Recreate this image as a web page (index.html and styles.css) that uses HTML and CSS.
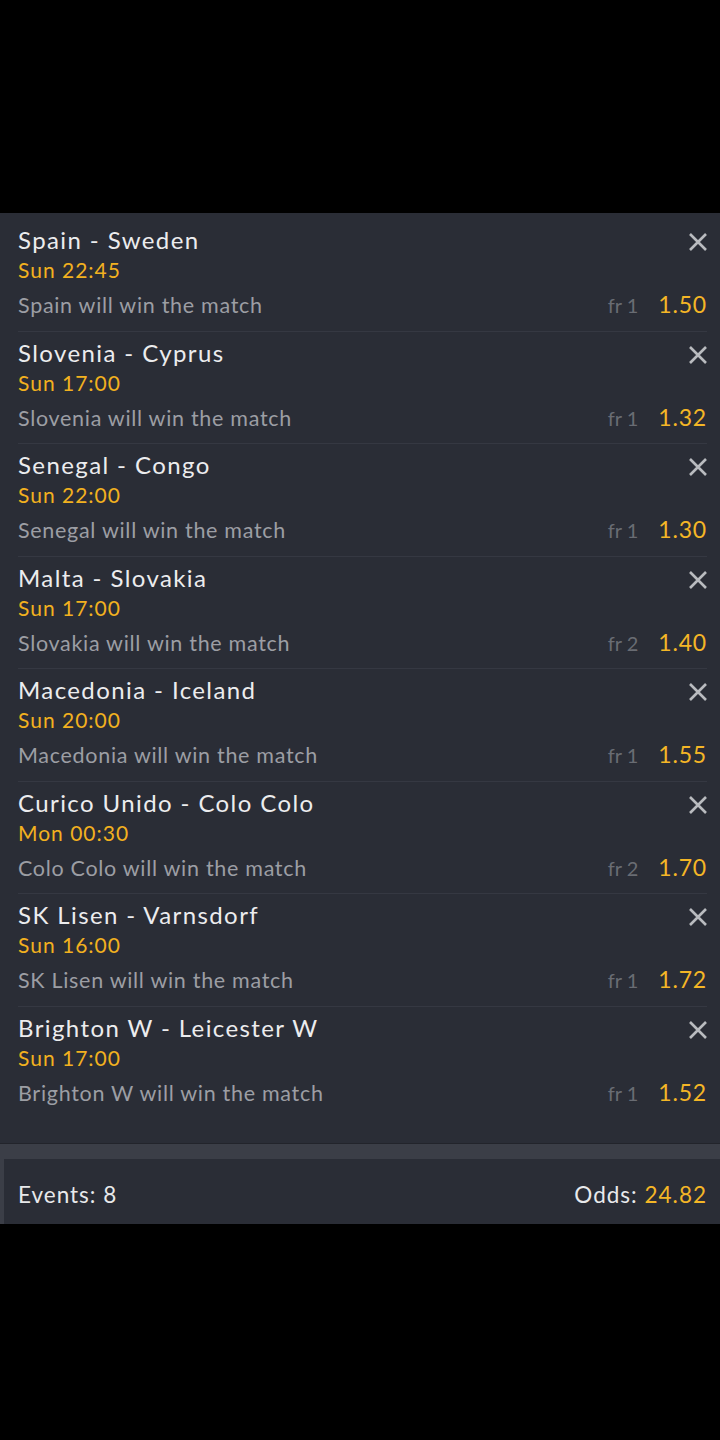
FILE: index.html
```html
<!DOCTYPE html>
<html lang="en">
<head>
  <meta charset="UTF-8">
  <title>Bet slip</title>
  <meta name="viewport" content="width=device-width,initial-scale=1">
  <link rel="stylesheet" href="styles.css">
</head>
<body>
  <div class="top-space"></div>
  <div class="slip">
    <div class="slip-list">
      <div class="bet">
        <div class="bet-head"><span class="bet-title">Spain - Sweden</span><span class="bet-close"><svg viewBox="0 0 20 20" width="20" height="20"><path d="M2 2L18 18M18 2L2 18"/></svg></span></div>
        <div class="bet-time">Sun 22:45</div>
        <div class="bet-foot"><span class="bet-pick">Spain will win the match</span><span class="bet-odds"><span class="bet-fr">fr 1</span><span class="bet-price">1.50</span></span></div>
      </div>
      <div class="bet">
        <div class="bet-head"><span class="bet-title">Slovenia - Cyprus</span><span class="bet-close"><svg viewBox="0 0 20 20" width="20" height="20"><path d="M2 2L18 18M18 2L2 18"/></svg></span></div>
        <div class="bet-time">Sun 17:00</div>
        <div class="bet-foot"><span class="bet-pick">Slovenia will win the match</span><span class="bet-odds"><span class="bet-fr">fr 1</span><span class="bet-price">1.32</span></span></div>
      </div>
      <div class="bet">
        <div class="bet-head"><span class="bet-title">Senegal - Congo</span><span class="bet-close"><svg viewBox="0 0 20 20" width="20" height="20"><path d="M2 2L18 18M18 2L2 18"/></svg></span></div>
        <div class="bet-time">Sun 22:00</div>
        <div class="bet-foot"><span class="bet-pick">Senegal will win the match</span><span class="bet-odds"><span class="bet-fr">fr 1</span><span class="bet-price">1.30</span></span></div>
      </div>
      <div class="bet">
        <div class="bet-head"><span class="bet-title">Malta - Slovakia</span><span class="bet-close"><svg viewBox="0 0 20 20" width="20" height="20"><path d="M2 2L18 18M18 2L2 18"/></svg></span></div>
        <div class="bet-time">Sun 17:00</div>
        <div class="bet-foot"><span class="bet-pick">Slovakia will win the match</span><span class="bet-odds"><span class="bet-fr">fr 2</span><span class="bet-price">1.40</span></span></div>
      </div>
      <div class="bet">
        <div class="bet-head"><span class="bet-title">Macedonia - Iceland</span><span class="bet-close"><svg viewBox="0 0 20 20" width="20" height="20"><path d="M2 2L18 18M18 2L2 18"/></svg></span></div>
        <div class="bet-time">Sun 20:00</div>
        <div class="bet-foot"><span class="bet-pick">Macedonia will win the match</span><span class="bet-odds"><span class="bet-fr">fr 1</span><span class="bet-price">1.55</span></span></div>
      </div>
      <div class="bet">
        <div class="bet-head"><span class="bet-title">Curico Unido - Colo Colo</span><span class="bet-close"><svg viewBox="0 0 20 20" width="20" height="20"><path d="M2 2L18 18M18 2L2 18"/></svg></span></div>
        <div class="bet-time">Mon 00:30</div>
        <div class="bet-foot"><span class="bet-pick">Colo Colo will win the match</span><span class="bet-odds"><span class="bet-fr">fr 2</span><span class="bet-price">1.70</span></span></div>
      </div>
      <div class="bet">
        <div class="bet-head"><span class="bet-title">SK Lisen - Varnsdorf</span><span class="bet-close"><svg viewBox="0 0 20 20" width="20" height="20"><path d="M2 2L18 18M18 2L2 18"/></svg></span></div>
        <div class="bet-time">Sun 16:00</div>
        <div class="bet-foot"><span class="bet-pick">SK Lisen will win the match</span><span class="bet-odds"><span class="bet-fr">fr 1</span><span class="bet-price">1.72</span></span></div>
      </div>
      <div class="bet">
        <div class="bet-head"><span class="bet-title">Brighton W - Leicester W</span><span class="bet-close"><svg viewBox="0 0 20 20" width="20" height="20"><path d="M2 2L18 18M18 2L2 18"/></svg></span></div>
        <div class="bet-time">Sun 17:00</div>
        <div class="bet-foot"><span class="bet-pick">Brighton W will win the match</span><span class="bet-odds"><span class="bet-fr">fr 1</span><span class="bet-price">1.52</span></span></div>
      </div>
    </div>
    <div class="slip-band"></div>
    <div class="slip-total">
      <span class="total-events">Events: 8</span>
      <span class="total-odds">Odds: <span class="total-value">24.82</span></span>
    </div>
  </div>
</body>
</html>
```

FILE: styles.css
```css
body {
  margin: 0;
  padding: 0;
  background: #000;
  font-family: 'Lato', 'Noto Sans', sans-serif;
  min-height: 1440px;
}
.top-space {
  height: 213px;
}
.slip {
  background: #2a2d36;
}
.slip-list {
  padding: 6px 0 25px 0;
  border-bottom: 1px solid #22242b;
}
.bet {
  margin: 0 13px 0 18px;
  padding: 5px 0 8.5px 0;
  border-bottom: 1px solid #353842;
}
.bet:last-child {
  border-bottom: none;
}
.bet-head, .bet-foot {
  display: flex;
  justify-content: space-between;
  white-space: nowrap;
}
.bet-head {
  height: 31px;
  line-height: 31px;
}
.bet-title {
  font-size: 24px;
  letter-spacing: 1.4px;
  color: #ececee;
}
.bet-close {
  display: flex;
  align-items: flex-start;
  flex-shrink: 0;
  padding-top: 8px;
  margin-right: -1px;
}
.bet-close svg {
  stroke: #b9bbbf;
  stroke-width: 2.6;
  fill: none;
}
.bet-time {
  height: 30px;
  font-size: 21px;
  line-height: 30px;
  letter-spacing: 1px;
  color: #f2b11f;
}
.bet-foot {
  height: 36px;
  margin-top: 1px;
  line-height: 36px;
  align-items: baseline;
}
.bet-pick {
  font-size: 21.5px;
  letter-spacing: 0.7px;
  color: #9c9ea4;
}
.bet-odds {
  flex-shrink: 0;
}
.bet-fr {
  font-size: 20px;
  color: #696c73;
  margin-right: 20px;
}
.bet-price {
  font-size: 23px;
  letter-spacing: 0.8px;
  color: #f4b626;
}
.slip-band {
  height: 15px;
  background: #3b3e47;
}
.slip-total {
  display: flex;
  justify-content: space-between;
  align-items: center;
  height: 60px;
  padding: 5px 13px 0 14px;
  border-left: 4px solid #3b3e47;
  font-size: 22.5px;
  letter-spacing: 1px;
  color: #e8e9eb;
}
.total-value {
  color: #f4b626;
}
```
